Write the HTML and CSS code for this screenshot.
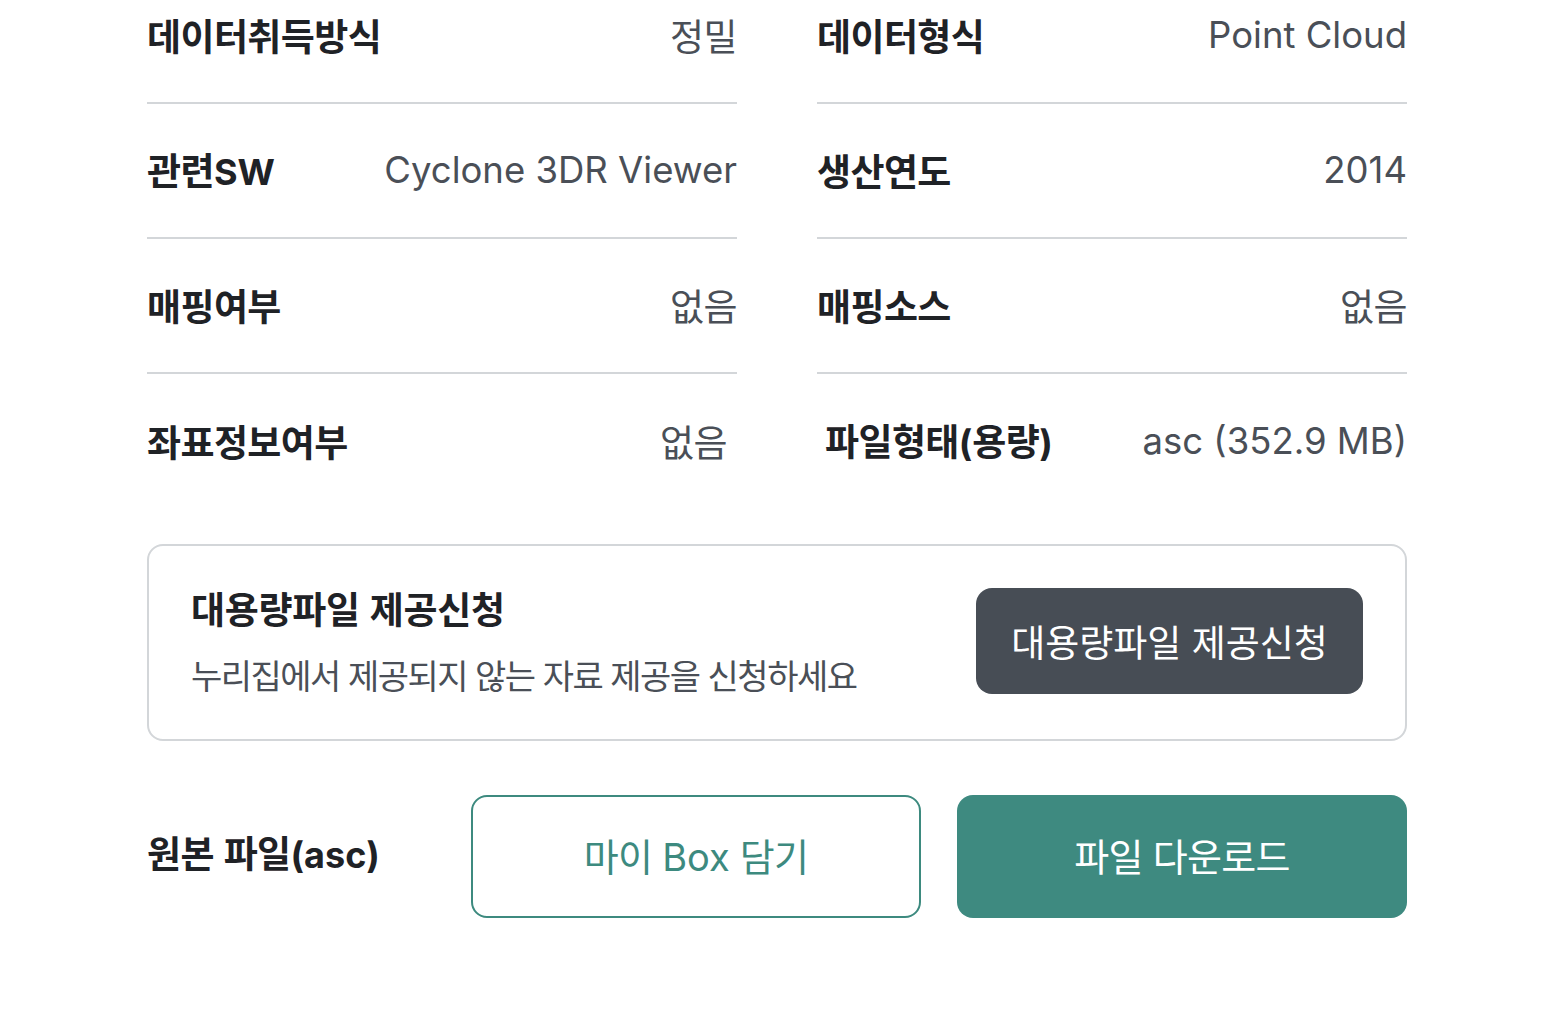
FILE: index.html
```html
<!DOCTYPE html>
<html lang="ko">
<head>
<meta charset="utf-8">
<title>데이터 상세</title>
<link rel="stylesheet" href="styles.css">
</head>
<body>
<main class="page">
  <section class="info-grid">
    <div class="info-row"><span class="label">데이터취득방식</span><span class="value">정밀</span></div>
    <div class="info-row"><span class="label">데이터형식</span><span class="value en">Point Cloud</span></div>
    <div class="info-row"><span class="label">관련<span class="en">SW</span></span><span class="value en">Cyclone 3DR Viewer</span></div>
    <div class="info-row"><span class="label">생산연도</span><span class="value en">2014</span></div>
    <div class="info-row"><span class="label">매핑여부</span><span class="value">없음</span></div>
    <div class="info-row"><span class="label">매핑소스</span><span class="value">없음</span></div>
    <div class="info-row last last-left"><span class="label">좌표정보여부</span><span class="value">없음</span></div>
    <div class="info-row last last-right"><span class="label">파일형태<span class="en">(</span>용량<span class="en">)</span></span><span class="value en">asc (352.9 MB)</span></div>
  </section>

  <section class="request-box">
    <div class="request-text">
      <h2 class="request-title">대용량파일 제공신청</h2>
      <p class="request-desc">누리집에서 제공되지 않는 자료 제공을 신청하세요</p>
    </div>
    <button class="btn btn-dark" type="button">대용량파일 제공신청</button>
  </section>

  <section class="download-row">
    <span class="download-label">원본 파일<span class="en">(asc)</span></span>
    <button class="btn btn-outline" type="button">마이 <span class="en">Box</span> 담기</button>
    <button class="btn btn-primary" type="button">파일 다운로드</button>
  </section>
</main>
</body>
</html>
```

FILE: styles.css
```css
* { box-sizing: border-box; }
html, body {
  margin: 0;
  padding: 0;
  background: #ffffff;
}
body {
  font-family: "Noto Sans CJK KR", "Inter", sans-serif;
  color: #212529;
}
.en {
  font-family: "Inter", "Noto Sans CJK KR", sans-serif;
  letter-spacing: 0;
}
.page {
  width: 1260px;
  margin: -31px 0 0 147px;
}
.info-grid {
  display: grid;
  grid-template-columns: 590px 590px;
  column-gap: 80px;
}
.info-row {
  display: flex;
  align-items: center;
  justify-content: space-between;
  height: 135px;
  border-bottom: 2px solid #d3d6d9;
  font-size: 37px;
  letter-spacing: -0.6px;
  line-height: 1;
}
.info-row.last { border-bottom: none; }
.info-row.last-left { padding-right: 10px; }
.info-row.last-right { padding-left: 8px; }
.label {
  font-weight: 700;
  color: #1f2226;
}
.label .en { font-size: 36px; }
.value {
  font-weight: 400;
  color: #4a4f57;
}
.value.en { font-size: 36.5px; }
.request-box {
  margin-top: 35px;
  border: 2px solid #d3d6d9;
  border-radius: 16px;
  padding: 42px 42px 45px;
  display: flex;
  align-items: center;
  justify-content: space-between;
}
.request-title {
  margin: 0;
  font-size: 37px;
  font-weight: 700;
  letter-spacing: -0.3px;
  line-height: 1;
  color: #1f2226;
}
.request-desc {
  margin: 31px 0 0;
  font-size: 34px;
  line-height: 1;
  letter-spacing: -1.5px;
  color: #4a4f57;
}
.btn {
  font-family: inherit;
  border-radius: 16px;
  cursor: pointer;
  padding: 0;
}
.btn-dark {
  width: 387px;
  height: 106px;
  background: #474d55;
  border: none;
  color: #ffffff;
  font-size: 37px;
  letter-spacing: 0;
}
.download-row {
  margin-top: 54px;
  display: flex;
  align-items: center;
}
.download-label {
  font-size: 37px;
  font-weight: 700;
  letter-spacing: -0.6px;
  line-height: 1;
  padding-bottom: 6px;
  color: #1f2226;
  width: 324px;
}
.download-label .en { font-size: 36px; letter-spacing: 0; }
.btn-outline,
.btn-primary {
  width: 450px;
  height: 123px;
  padding-bottom: 4px;
  font-size: 38px;
  letter-spacing: -0.7px;
}
.btn-outline .en { letter-spacing: 0; }
.btn-outline {
  background: #ffffff;
  border: 2px solid #3d8a7f;
  color: #3d8a7f;
}
.btn-primary {
  margin-left: 36px;
  background: #3e8a80;
  border: none;
  color: #ffffff;
}
```
